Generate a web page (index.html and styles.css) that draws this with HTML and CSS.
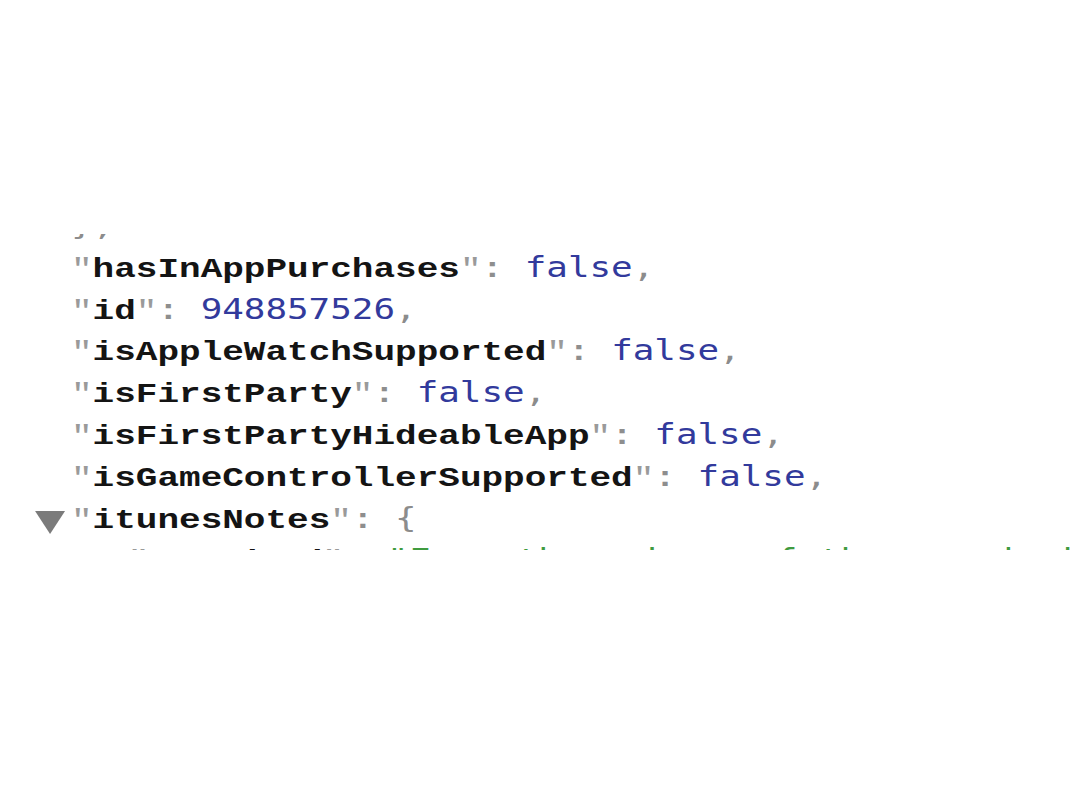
FILE: index.html
```html
<!DOCTYPE html>
<html>
<head>
<meta charset="utf-8">
<link rel="stylesheet" href="styles.css">
</head>
<body>
<div class="page">
  <div class="viewport">
    <div class="code">
      <div class="row"><span class="gutter"></span><span class="line"><span class="p">}</span><span class="p">,</span></span></div>
      <div class="row"><span class="gutter"></span><span class="line"><span class="q">"</span><span class="k">hasInAppPurchases</span><span class="q">"</span><span class="c">:</span> <span class="v">false</span><span class="p">,</span></span></div>
      <div class="row"><span class="gutter"></span><span class="line"><span class="q">"</span><span class="k">id</span><span class="q">"</span><span class="c">:</span> <span class="v">948857526</span><span class="p">,</span></span></div>
      <div class="row"><span class="gutter"></span><span class="line"><span class="q">"</span><span class="k">isAppleWatchSupported</span><span class="q">"</span><span class="c">:</span> <span class="v">false</span><span class="p">,</span></span></div>
      <div class="row"><span class="gutter"></span><span class="line"><span class="q">"</span><span class="k">isFirstParty</span><span class="q">"</span><span class="c">:</span> <span class="v">false</span><span class="p">,</span></span></div>
      <div class="row"><span class="gutter"></span><span class="line"><span class="q">"</span><span class="k">isFirstPartyHideableApp</span><span class="q">"</span><span class="c">:</span> <span class="v">false</span><span class="p">,</span></span></div>
      <div class="row"><span class="gutter"></span><span class="line"><span class="q">"</span><span class="k">isGameControllerSupported</span><span class="q">"</span><span class="c">:</span> <span class="v">false</span><span class="p">,</span></span></div>
      <div class="row"><span class="gutter"><svg class="disclosure" viewBox="0 0 24 23" width="23.75" height="23"><polygon points="0,0 24,0 12,23" fill="#7b7b7b"/></svg></span><span class="line"><span class="q">"</span><span class="k">itunesNotes</span><span class="q">"</span><span class="c">:</span> <span class="p">{</span></span></div>
      <div class="row"><span class="gutter"></span><span class="line indent"><span class="q">"</span><span class="k">standard</span><span class="q">"</span><span class="c">:</span> <span class="s">"From the makers of the award-winning</span></span></div>
    </div>
  </div>
</div>
</body>
</html>
```

FILE: styles.css
```css
html, body {
  margin: 0;
  padding: 0;
  background: #ffffff;
}

.page {
  width: 1080px;
  height: 810px;
  padding-top: 234px;
  box-sizing: border-box;
}

.viewport {
  margin-left: 30px;
  width: 1040px;
  height: 316px;
  overflow: hidden;
}

.code {
  margin-top: -29px;
  transform: scaleX(1.2632);
  transform-origin: 0 0;
  font-family: "DejaVu Sans Mono", monospace;
  font-size: 28.4px;
}

.row {
  display: flex;
  height: 41.8px;
}

.gutter {
  flex: none;
  width: 32.46px;
  box-sizing: border-box;
  padding-left: 4px;
  padding-top: 13px;
  display: flex;
  align-items: flex-start;
}

.disclosure {
  display: block;
}

.line {
  white-space: pre;
  line-height: 41.8px;
  color: #8c8c8c;
}

.indent {
  padding-left: 45px;
}

.k {
  font-family: "Liberation Mono", monospace;
  font-size: 28.5px;
  font-weight: bold;
  color: #141414;
}

.q {
  font-family: "Liberation Mono", monospace;
  font-size: 28.5px;
  color: #9a9a9a;
}

.c {
  font-family: "Liberation Mono", monospace;
  font-size: 28.5px;
  font-weight: bold;
  color: #8e8e8e;
}

.v {
  color: #323a9c;
}

.p {
  color: #8c8c8c;
}

.s {
  color: #3f9b3f;
}
```
